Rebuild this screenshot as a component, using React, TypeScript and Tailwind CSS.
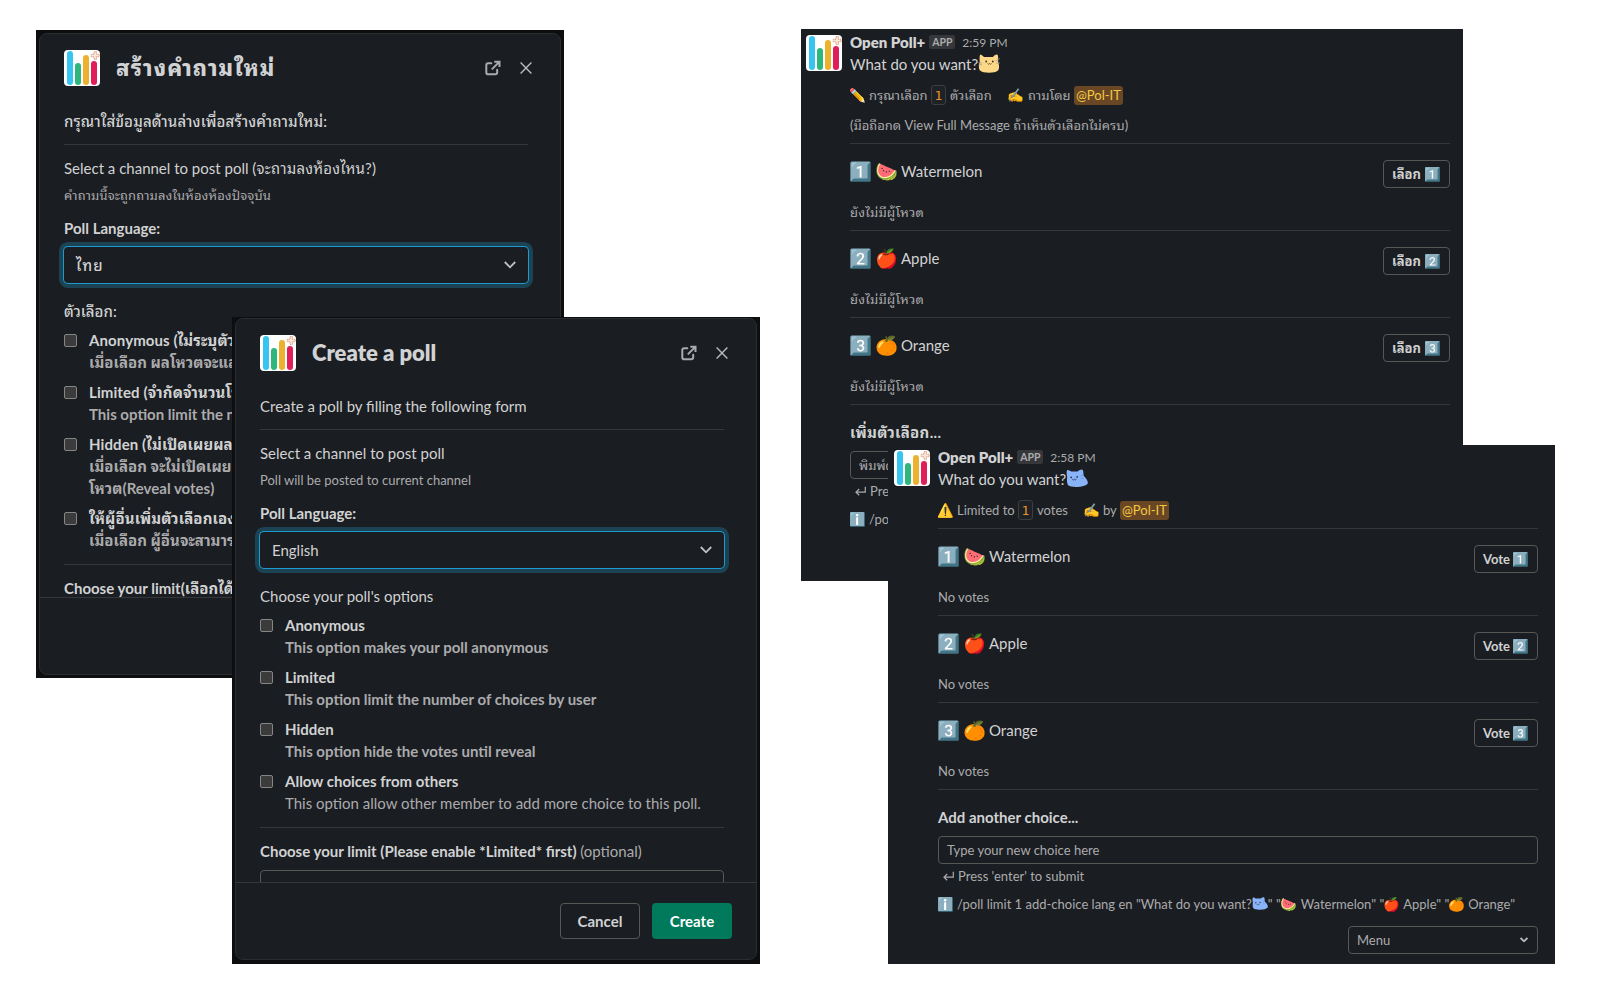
import React from "react";

const FONT = "font-['Lato','Noto_Sans_Thai_Looped','Noto_Color_Emoji',sans-serif]";

function Logo() {
  return (
    <svg width="36" height="36" viewBox="0 0 36 36" className="block shrink-0">
      <rect width="36" height="36" rx="4" fill="#fff" />
      <rect x="3" y="1" width="6" height="34" rx="3" fill="#36c5f0" />
      <rect x="11" y="13" width="6" height="22" rx="3" fill="#2eb67d" />
      <rect x="19" y="5" width="6" height="30" rx="3" fill="#ecb22e" />
      <rect x="27" y="11" width="6" height="24" rx="3" fill="#e01e5a" />
      <path
        d="M30 1.6h2.4v2.7h2.8v2.4h-2.8v2.7H30V6.700h-2.800V4.300H30z"
        fill="#fbe9df"
        stroke="#d99a78"
        strokeWidth="0.9"
        strokeDasharray="1.6 0.5"
      />
    </svg>
  );
}

function BigEmoji({ children }: { children: string }) {
  return (
    <span className="flex h-[21px] w-[21px] shrink-0 items-center justify-center pt-[3px] font-['Noto_Color_Emoji'] text-[18.500px] font-normal leading-none">
      {children}
    </span>
  );
}

function SmallEmoji({ children }: { children: string }) {
  return (
    <span className="flex h-[15px] w-[15px] shrink-0 items-center justify-center pt-px font-['Noto_Color_Emoji'] text-[13.500px] font-normal leading-none">
      {children}
    </span>
  );
}

function CatYellow({ size }: { size: number }) {
  return (
    <svg width={size} height={size} viewBox="0 0 22 22" className="block shrink-0">
      <path d="M2.300 1.500C3.500 1.500 5 3 6 4H15C16 2.500 18.500 .8 19.500 1.800C20.500 3 20 6 20.200 9C21.300 12 21.500 16 20 17.500C17 20.500 5 20.500 2 17.500C.3 15.500 1 11 1.800 8.500C1.500 6 1.300 2.500 2.300 1.500z" fill="#fdd888" />
      <circle cx="8.200" cy="8.500" r=".9" fill="#3a3020" />
      <circle cx="14.800" cy="8.500" r=".9" fill="#3a3020" />
      <path d="M9.500 10.500Q10.500 12 11.500 10.500Q12.500 12 13.500 10.500" fill="none" stroke="#4a3a20" strokeWidth=".8" />
      <path d="M.3 9.500L4 10M.3 12.300L4 11.500M17.500 8L22 5.500M18 10H22" stroke="#8f9a94" strokeWidth=".7" />
    </svg>
  );
}

function CatBlue({ size }: { size: number }) {
  return (
    <svg width={size} height={size} viewBox="0 0 22 22" className="block shrink-0">
      <path d="M1.200 2C2.500 1.800 4.200 2.700 5.200 3.500H11.500C13 2.300 15.200 1.200 16.500 1.700C18 3 17 6 17.800 8C20 10 22.500 13.500 21.700 15.500C20 19.300 5 20.300 2 17C.6 15.200 .9 11 1.200 9C.6 7 .4 3.300 1.200 2z" fill="#89b4fa" />
      <circle cx="5.200" cy="9.300" r=".9" fill="#25304d" />
      <circle cx="11.200" cy="8.800" r=".9" fill="#25304d" />
      <path d="M6.300 11.300Q7.400 12.900 8.400 11.200Q9.500 12.700 10.500 11" fill="none" stroke="#2b3858" strokeWidth=".9" />
      <path d="M14.500 8.500L17.500 7M14.500 10.500H18" stroke="#6b93d6" strokeWidth=".7" />
    </svg>
  );
}

function ReturnKey() {
  return (
    <svg width="11" height="10" viewBox="0 0 11 10" className="block shrink-0" fill="none" stroke="#ababad" strokeWidth="1.200">
      <path d="M10.300 .8V6.200H1.200M4.200 3L1 6.200L4.200 9.300" />
    </svg>
  );
}

function ExternalIcon() {
  return (
    <svg width="16" height="16" viewBox="0 0 16 16" className="block" fill="none" stroke="#ababad" strokeWidth="2">
      <path d="M6.300 3.200H3.200C1.900 3.200 1.300 3.900 1.300 5.100V12.400C1.300 13.500 2 14.200 3.100 14.200H10.300C11.500 14.200 12.200 13.500 12.200 12.300V9.800" strokeLinecap="round" />
      <path d="M9.300 1.700H14.500V6.900M14.300 1.900L6.800 9.400" />
    </svg>
  );
}

function CloseIcon() {
  return (
    <svg width="12" height="12" viewBox="0 0 12 12" className="block" fill="none" stroke="#b9babd" strokeWidth="1.400">
      <path d="M.6 .6L11.400 11.400M11.400 .6L.6 11.400" />
    </svg>
  );
}

type Option = { label: string; lines: string[]; plain?: boolean };
type ModalProps = {
  title: React.ReactNode;
  intro: React.ReactNode;
  channel: React.ReactNode;
  note: React.ReactNode;
  language: React.ReactNode;
  optionsLabel: React.ReactNode;
  options: Option[];
  optionsTracking?: string;
  limit: React.ReactNode;
  footer?: React.ReactNode;
};

function Modal(p: ModalProps) {
  return (
    <div className="flex h-[642px] w-[522px] flex-col overflow-hidden rounded-lg border border-[#2b2d30] bg-[#1a1d21] text-[15px] leading-[22px] text-[#d1d2d3]">
      <div className="flex h-[563px] flex-col overflow-hidden pl-6 pr-8">
        <div className="flex h-[70px] shrink-0 items-center pb-0.5">
          <Logo />
          <h1 className="ml-4 flex-1 whitespace-nowrap text-[22px] font-extrabold leading-[30px]">{p.title}</h1>
          <ExternalIcon />
          <span className="-mr-1 ml-[19px]">
            <CloseIcon />
          </span>
        </div>
        <div className="mt-1.5 h-[22px] shrink-0 whitespace-nowrap">{p.intro}</div>
        <div className="mt-3 h-px shrink-0 bg-[#35373b]" />
        <div className="mt-3 h-[22px] shrink-0 whitespace-nowrap">{p.channel}</div>
        <div className="mt-[7px] h-[18px] shrink-0 whitespace-nowrap text-[13px] leading-[18px] text-[#ababad]">{p.note}</div>
        <div className="mt-[13px] h-[22px] shrink-0 font-bold">Poll Language:</div>
        <div className="mt-2 flex h-9 shrink-0 items-center justify-between rounded-[4px] pl-3 pr-3 shadow-[0_0_0_1px_#1d9bd1,0_0_0_5px_#1c4354]">
          <span>{p.language}</span>
          <svg width="12" height="8" viewBox="0 0 12 8" fill="none" stroke="#c0c1c3" strokeWidth="1.800">
            <path d="M.8 1L6 6.300L11.200 1" />
          </svg>
        </div>
        <div className="mt-[17px] h-[22px] shrink-0">{p.optionsLabel}</div>
        <div className="mt-[7px] flex shrink-0 flex-col gap-2">
          {p.options.map((o) => (
            <div key={o.label} className="flex gap-3">
              <span className="mt-[5px] h-[13px] w-[13px] shrink-0 rounded-[2px] border border-[#858585] bg-[#3b3b3b]" />
              <div className="whitespace-nowrap">
                <div className={`font-bold ${p.optionsTracking ?? ""}`}>{o.label}</div>
                {o.lines.map((l) => (
                  <div key={l} className={o.plain ? "text-[#ababad]" : "font-bold text-[#ababad]"}>
                    {l}
                  </div>
                ))}
              </div>
            </div>
          ))}
        </div>
        <div className="mt-[13px] h-px shrink-0 bg-[#35373b]" />
        <div className="mt-3 h-[22px] shrink-0 whitespace-nowrap font-bold">{p.limit}</div>
        <div className="mt-2 h-9 shrink-0 rounded-[4px] border border-[#565856]" />
      </div>
      <div className="flex flex-1 justify-end gap-3 border-t border-[#35373b] px-6 pt-5">{p.footer}</div>
    </div>
  );
}

const CHOICES = [
  { name: "Watermelon", keycap: "1️⃣", fruit: "🍉" },
  { name: "Apple", keycap: "2️⃣", fruit: "🍎" },
  { name: "Orange", keycap: "3️⃣", fruit: "🍊" },
];

type MessageProps = {
  time: string;
  cat: React.ReactNode;
  context: React.ReactNode;
  vote: string;
  voteWidth: string;
  empty: React.ReactNode;
  addLabel: React.ReactNode;
  placeholder: string;
  command: React.ReactNode;
};

function Message(p: MessageProps) {
  return (
    <div className="flex gap-2 text-[15px] leading-[22px] text-[#d1d2d3]">
      <Logo />
      <div className="-mt-1 w-[600px]">
        <div className="flex h-[22px] items-center">
          <span className="font-extrabold">Open Poll+</span>
          <span className="ml-1 flex h-[14px] w-[26px] items-center justify-center rounded-[2px] bg-[#35373b] text-[10.500px] font-bold leading-none text-[#ababad]">
            APP
          </span>
          <span className="ml-[7px] mt-0.5 text-xs leading-4 text-[#ababad]">{p.time}</span>
        </div>
        <div className="flex h-[22px]">
          <span>What do you want?</span>
          {p.cat}
        </div>
        {p.context}
        <div className="h-px bg-[#35373b]" />
        {CHOICES.map((c) => (
          <div key={c.name} className="flex h-[87px] flex-col border-b border-[#35373b]">
            <div className="flex h-[44px] items-start pt-4">
              <BigEmoji>{c.keycap}</BigEmoji>
              <span className="ml-[5px]">
                <BigEmoji>{c.fruit}</BigEmoji>
              </span>
              <span className="ml-1 flex-1">{c.name}</span>
              <div className={`flex h-7 items-center rounded-[4px] border border-[#565856] pl-2 text-[13px] font-bold leading-[18px] ${p.voteWidth}`}>
                <span className="mb-px flex-1 whitespace-nowrap">{p.vote}</span>
                <span className="mr-[9px]">
                  <SmallEmoji>{c.keycap}</SmallEmoji>
                </span>
              </div>
            </div>
            <div className="mt-[15px] h-[18px] text-[13px] leading-[18px] text-[#ababad]">{p.empty}</div>
          </div>
        ))}
        <div className="mt-4 h-[22px] font-bold">{p.addLabel}</div>
        <div className="mt-2 flex h-7 items-center rounded-[4px] border border-[#565856] pl-2 text-[13px] leading-[18px] text-[#ababad]">
          {p.placeholder}
        </div>
        <div className="mt-[3px] flex h-[18px] items-center pl-[5px] text-[13px] leading-[18px] text-[#ababad]">
          <ReturnKey />
          <span className="ml-1">Press 'enter' to submit</span>
        </div>
        <div className="mt-2.5 flex h-[18px] items-center whitespace-nowrap text-[13px] leading-[18px] text-[#ababad]">
          <SmallEmoji>ℹ️</SmallEmoji>
          <span className="ml-1">/poll limit 1 add-choice lang&nbsp;</span>
          {p.command}
        </div>
      </div>
    </div>
  );
}

const CODE =
  "flex h-5 w-[15px] items-center justify-center rounded-[3px] border border-[#3c3e41] bg-[#1e2125] font-['DejaVu_Sans_Mono',monospace] text-[13px] leading-none text-[#e8912d]";
const MENTION = "h-[19px] rounded-[3px] bg-[#6a4724] px-0.5 leading-[18px] text-[#f2c744]";

export default function App() {
  return (
    <main className={`relative h-[1000px] w-[1600px] overflow-hidden bg-white ${FONT}`}>
      <section className="absolute left-[36px] top-[30px] h-[648px] w-[528px] overflow-hidden bg-[#0d0e10] pl-[3px] pt-[3px]">
        <Modal
          title={<span className="tracking-[1.05px]">สร้างคำถามใหม่</span>}
          intro={<span className="font-medium tracking-[0.12px]">กรุณาใส่ข้อมูลด้านล่างเพื่อสร้างคำถามใหม่:</span>}
          channel={
            <>
              Select a channel to post poll <span className="tracking-[0.2px]">(จะถามลงห้องไหน?)</span>
            </>
          }
          note={<span className="tracking-[0.1px]">คำถามนี้จะถูกถามลงในห้องห้องปัจจุบัน</span>}
          language={<span className="font-medium tracking-[1.1px]">ไทย</span>}
          optionsLabel={<span className="font-medium">ตัวเลือก:</span>}
          optionsTracking="tracking-[0.1px]"
          options={[
            { label: "Anonymous (ไม่ระบุตัวตน)", lines: ["เมื่อเลือก ผลโหวตจะแสดง"] },
            { label: "Limited (จำกัดจำนวนโหวต)", lines: ["This option limit the number"] },
            { label: "Hidden (ไม่เปิดเผยผลโหวต)", lines: ["เมื่อเลือก จะไม่เปิดเผยผล", "โหวต(Reveal votes)"] },
            { label: "ให้ผู้อื่นเพิ่มตัวเลือกเองได้", lines: ["เมื่อเลือก ผู้อื่นจะสามารถ"] },
          ]}
          limit="Choose your limit(เลือกได้กี่ข้อ)"
        />
      </section>

      <section className="absolute left-[232px] top-[317px] h-[647px] w-[528px] overflow-hidden bg-[#0d0e10] pl-[3px] pt-px">
        <Modal
          title="Create a poll"
          intro="Create a poll by filling the following form"
          channel="Select a channel to post poll"
          note="Poll will be posted to current channel"
          language="English"
          optionsLabel="Choose your poll's options"
          options={[
            { label: "Anonymous", lines: ["This option makes your poll anonymous"] },
            { label: "Limited", lines: ["This option limit the number of choices by user"] },
            { label: "Hidden", lines: ["This option hide the votes until reveal"] },
            { label: "Allow choices from others", lines: ["This option allow other member to add more choice to this poll."], plain: true },
          ]}
          limit={
            <>
              Choose your limit (Please enable *Limited* first) <span className="font-normal text-[#ababad]">(optional)</span>
            </>
          }
          footer={
            <>
              <button className="h-9 w-20 rounded-[4px] border border-[#565856] font-bold">Cancel</button>
              <button className="h-9 w-20 rounded-[4px] bg-[#007a5a] font-bold text-white">Create</button>
            </>
          }
        />
      </section>

      <section className="absolute left-[801px] top-[29px] h-[552px] w-[662px] overflow-hidden bg-[#1a1d21] pl-[5px] pt-1.5">
        <Message
          time="2:59 PM"
          cat={<CatYellow size={22} />}
          context={
            <div className="h-[68px] pt-2.5 text-[13px] leading-[18px] text-[#ababad]">
              <div className="flex h-5 items-center whitespace-nowrap">
                <SmallEmoji>✏️</SmallEmoji>
                <span className="ml-1 w-[62px]">กรุณาเลือก</span>
                <span className={CODE}>1</span>
                <span className="ml-1 w-[58px]">ตัวเลือก</span>
                <SmallEmoji>✍️</SmallEmoji>
                <span className="ml-[5px] w-[46px]">ถามโดย</span>
                <span className={MENTION}>@Pol-IT</span>
              </div>
              <div className="mt-[11px] whitespace-nowrap">(มือถือกด View Full Message ถ้าเห็นตัวเลือกไม่ครบ)</div>
            </div>
          }
          vote="เลือก"
          voteWidth="w-[67px]"
          empty={<span className="tracking-[0.2px]">ยังไม่มีผู้โหวต</span>}
          addLabel={<span className="tracking-[0.3px]">เพิ่มตัวเลือก...</span>}
          placeholder="พิมพ์ตัวเลือกใหม่"
          command="th"
        />
      </section>

      <section className="absolute left-[888px] top-[445px] h-[519px] w-[667px] overflow-hidden bg-[#1a1d21] pl-1.5 pt-[5px]">
        <Message
          time="2:58 PM"
          cat={<CatBlue size={22} />}
          context={
            <div className="h-[38px] pt-2.5 text-[13px] leading-[18px] text-[#ababad]">
              <div className="flex h-5 items-center whitespace-nowrap">
                <SmallEmoji>⚠️</SmallEmoji>
                <span className="ml-1 w-[61px]">Limited to</span>
                <span className={CODE}>1</span>
                <span className="ml-1 w-[47px]">votes</span>
                <SmallEmoji>✍️</SmallEmoji>
                <span className="ml-1 w-[17px]">by</span>
                <span className={MENTION}>@Pol-IT</span>
              </div>
            </div>
          }
          vote="Vote"
          voteWidth="w-16"
          empty="No votes"
          addLabel="Add another choice..."
          placeholder="Type your new choice here"
          command={
            <>
              <span>en "What do you want?</span>
              <CatBlue size={16} />
              <span>" "</span>
              <SmallEmoji>🍉</SmallEmoji>
              <span className="ml-[5px]">Watermelon" "</span>
              <SmallEmoji>🍎</SmallEmoji>
              <span className="ml-1">Apple" "</span>
              <SmallEmoji>🍊</SmallEmoji>
              <span className="ml-1">Orange"</span>
            </>
          }
        />
        <div className="ml-[454px] mt-[13px] flex h-7 w-[190px] items-center justify-between rounded-[4px] border border-[#565856] pl-2 pr-[9px] text-[13px] leading-[18px] text-[#ababad]">
          Menu
          <svg width="8" height="6" viewBox="0 0 8 6" fill="none" stroke="#b9babd" strokeWidth="1.800">
            <path d="M.6 1L4 4.300L7.400 1" />
          </svg>
        </div>
      </section>
    </main>
  );
}
